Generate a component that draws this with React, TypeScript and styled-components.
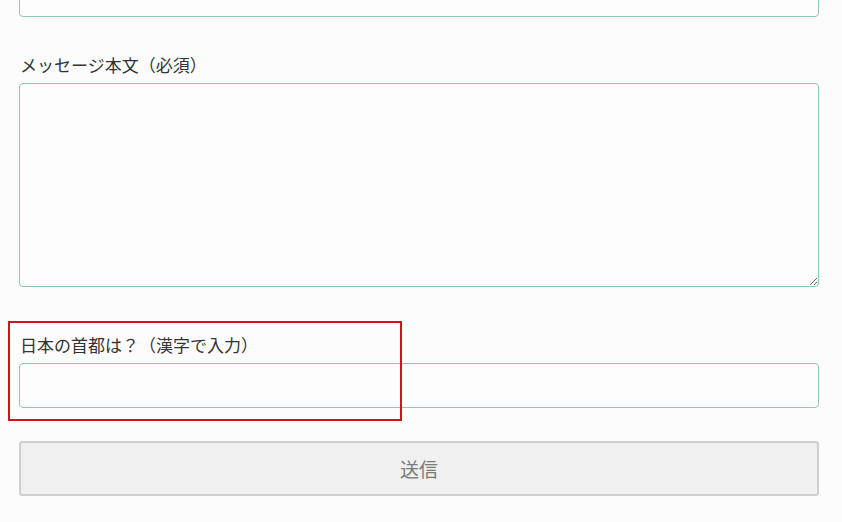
import React from "react";
import styled, { createGlobalStyle } from "styled-components";

const Global = createGlobalStyle`
  html, body { margin: 0; padding: 0; background: #fcfcfc; }
  body { font-family: "Noto Sans CJK JP", "Noto Sans", sans-serif; color: #333; overflow: hidden; }
`;

const Form = styled.form`
  width: 800px;
  margin: -28px 0 0 19px;
  display: flex;
  flex-direction: column;
`;

const Field = styled.div<{ $gap: number }>`
  position: relative;
  display: flex;
  flex-direction: column;
  margin-bottom: ${(p) => p.$gap}px;
`;

const Label = styled.label`
  display: block;
  font-size: 17px;
  line-height: 24px;
  margin: 0 0 6px 1px;
  color: #333;
`;

const Input = styled.input`
  box-sizing: border-box;
  width: 100%;
  height: 45px;
  border: 1px solid #8cc8b8;
  border-radius: 4px;
  background: #fdfdfd;
  padding: 0 10px;
  font: inherit;
  outline: none;
`;

const TextArea = styled.textarea`
  box-sizing: border-box;
  display: block;
  width: 100%;
  height: 204px;
  border: 1px solid #8cc8b8;
  border-radius: 4px;
  background: #fdfdfd;
  padding: 8px 10px;
  font: inherit;
  outline: none;
  resize: vertical;
`;

const Highlight = styled.div`
  position: absolute;
  left: -11px;
  top: -12px;
  width: 394px;
  height: 100px;
  box-sizing: border-box;
  border: 2px solid #d0141c;
  pointer-events: none;
`;

const Submit = styled.button`
  box-sizing: border-box;
  width: 100%;
  height: 55px;
  background: #f0f0f0;
  border: 2px solid #cfcfcf;
  border-radius: 3px;
  color: #7a7a7a;
  font-family: inherit;
  font-size: 19px;
`;

export default function App() {
  return (
    <>
      <Global />
      <Form onSubmit={(e) => e.preventDefault()}>
        <Field $gap={36}>
          <Input type="text" />
        </Field>
        <Field $gap={46}>
          <Label>メッセージ本文（必須）</Label>
          <TextArea />
        </Field>
        <Field $gap={33}>
          <Label>日本の首都は？（漢字で入力）</Label>
          <Input type="text" />
          <Highlight />
        </Field>
        <Submit type="submit">送信</Submit>
      </Form>
    </>
  );
}
